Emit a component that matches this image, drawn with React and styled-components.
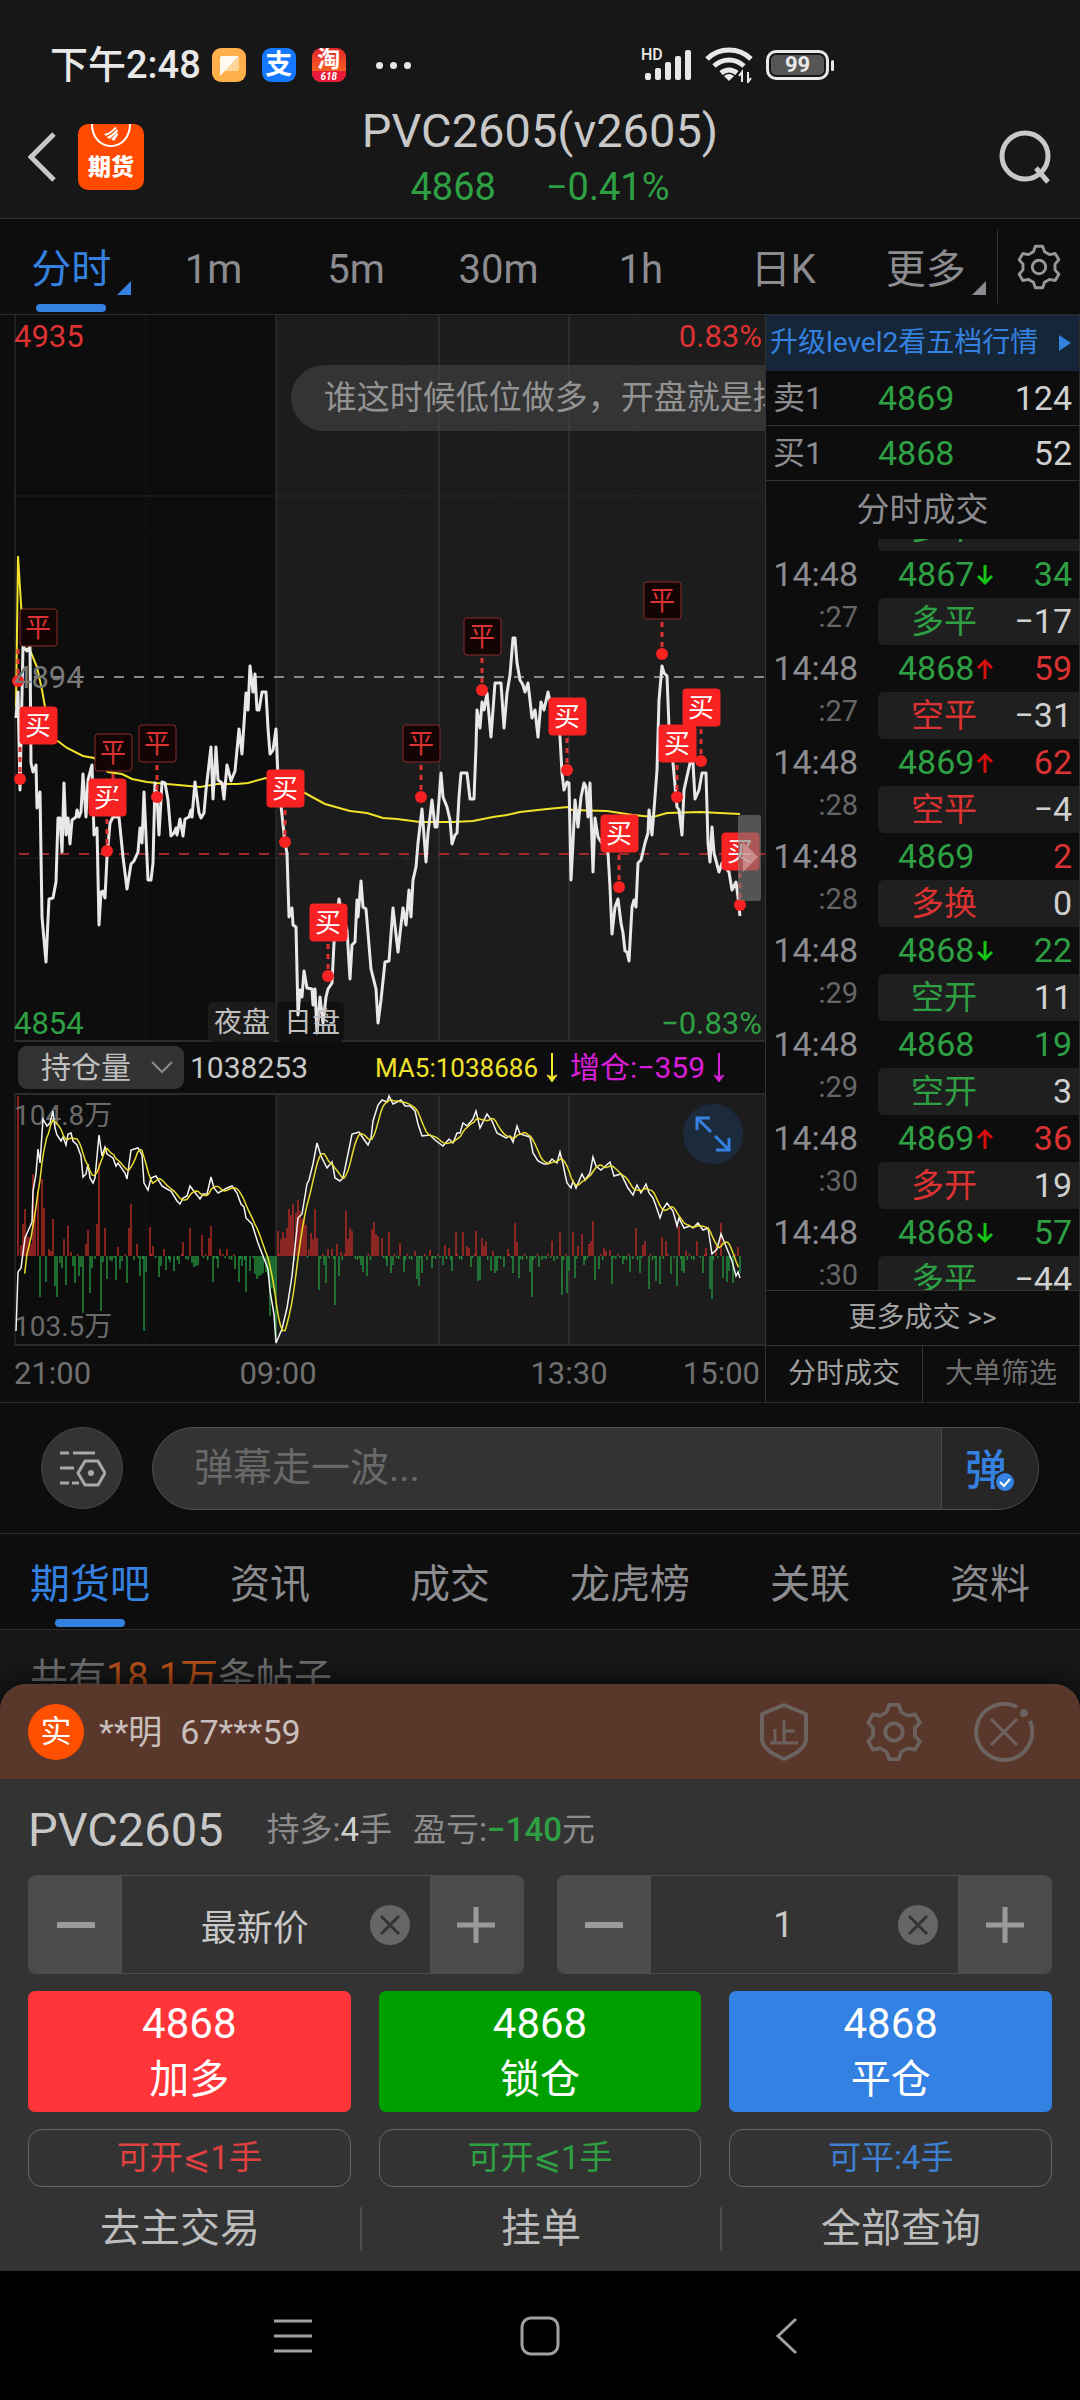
import React from 'react';
import { useState } from 'react';
import styled, { createGlobalStyle } from 'styled-components';

const RED = '#dc3232';
const GREEN = '#2ea043';
const BLUE = '#3581e0';
const LINE = '#2d2d2d';

const GlobalStyle = createGlobalStyle`
  * { box-sizing: border-box; }
  body { margin: 0; background: #000000; }
  body, button, input {
    font-family: Roboto, "Noto Sans CJK SC", "DejaVu Sans", sans-serif;
    font-weight: 400;
  }
  button {
    display: flex;
    align-items: center;
    justify-content: center;
    margin: 0;
    padding: 0;
    border: 0;
    background: none;
    color: inherit;
    cursor: pointer;
  }
  svg { display: block; flex: none; }
  p, h1, h2 { margin: 0; font-weight: 400; }
`;

/* ---------- data ---------- */

const periods = ['分时', '1m', '5m', '30m', '1h', '日K', '更多'];
const sections = ['期货吧', '资讯', '成交', '龙虎榜', '关联', '资料'];

const quotes = [
  { name: '卖1', price: '4869', count: '124' },
  { name: '买1', price: '4868', count: '52' },
];

const trades = [
  { time: '14:48', sec: ':26', price: '4868', dir: '', qty: '4', type: '多平', diff: '−2', up: false },
  { time: '14:48', sec: ':27', price: '4867', dir: 'down', qty: '34', type: '多平', diff: '−17', up: false },
  { time: '14:48', sec: ':27', price: '4868', dir: 'up', qty: '59', type: '空平', diff: '−31', up: true },
  { time: '14:48', sec: ':28', price: '4869', dir: 'up', qty: '62', type: '空平', diff: '−4', up: true },
  { time: '14:48', sec: ':28', price: '4869', dir: '', qty: '2', type: '多换', diff: '0', up: true },
  { time: '14:48', sec: ':29', price: '4868', dir: 'down', qty: '22', type: '空开', diff: '11', up: false },
  { time: '14:48', sec: ':29', price: '4868', dir: '', qty: '19', type: '空开', diff: '3', up: false },
  { time: '14:48', sec: ':30', price: '4869', dir: 'up', qty: '36', type: '多开', diff: '19', up: true },
  { time: '14:48', sec: ':30', price: '4868', dir: 'down', qty: '57', type: '多平', diff: '−44', up: false },
];

const orders = [
  { price: '4868', label: '加多', color: '#ff3539', limit: '可开⩽1手', limitColor: '#e04040' },
  { price: '4868', label: '锁仓', color: '#009f00', limit: '可开⩽1手', limitColor: GREEN },
  { price: '4868', label: '平仓', color: '#3381e3', limit: '可平:4手', limitColor: '#3d7fd0' },
];

const priceLine =
  '16,403 18,377 20,475 23,332 27,336 30,332 31,448 33,457 36,450 37,493 40,477 42,602 46,647 49,584 53,583 56,567 58,503 60,503 62,537 64,468 66,520 68,503 70,529 72,505 76,502 77,495 79,502 81,497 83,459 86,502 88,465 92,450 94,520 97,513 99,610 101,577 103,576 105,583 107,542 110,508 113,502 119,502 123,542 127,574 131,549 134,546 138,537 140,513 142,528 144,477 148,565 151,565 153,548 155,468 157,482 159,520 162,467 165,468 168,485 171,521 174,518 176,513 177,520 180,504 183,521 185,504 189,502 191,495 192,502 195,467 199,498 201,503 204,498 206,475 211,432 213,484 216,432 218,465 222,468 224,484 227,450 231,466 235,456 239,414 242,439 246,378 248,395 250,351 253,377 255,359 257,395 259,395 262,377 266,377 268,413 270,439 273,435 276,414 278,462 282,500 285,528 287,538 289,602 292,593 293,610 296,612 298,700 300,675 302,682 304,656 307,673 312,674 313,690 315,674 317,718 320,682 323,708 326,682 328,674 332,668 334,628 339,584 343,602 347,615 350,664 352,630 355,627 357,585 358,602 361,566 363,592 366,594 368,618 371,654 376,674 378,708 381,685 385,647 389,646 393,593 398,637 401,610 403,593 406,610 409,575 411,602 413,565 416,552 418,528 422,494 426,547 428,518 432,485 435,512 437,512 441,458 443,482 447,492 450,505 452,529 455,520 457,518 459,482 461,458 467,458 470,484 474,484 476,432 477,395 480,413 482,387 484,395 487,378 491,422 495,368 501,368 504,413 507,378 510,360 513,323 515,323 517,348 520,365 523,370 525,377 528,368 532,403 535,395 538,422 541,387 544,395 548,377 552,395 557,398 560,422 562,458 564,475 567,467 569,468 571,565 573,528 575,485 578,512 581,482 584,468 586,472 588,502 590,468 593,557 595,503 598,522 608,538 610,572 612,619 615,592 618,584 621,608 623,618 625,636 627,637 629,646 632,592 634,585 636,592 638,548 641,545 645,528 648,518 649,495 652,520 654,495 657,455 659,385 662,351 664,358 667,361 669,412 673,448 677,492 679,495 682,520 684,475 690,448 693,448 695,484 699,475 702,458 706,458 708,528 710,547 712,512 714,538 719,557 722,548 729,557 732,575 736,567 738,582 740,601';

const avgLine =
  '16,392 18,241 22,305 24,333 30,335 37,352 42,375 45,392 55,424 67,433 83,441 94,443 108,457 122,459 132,464 147,467 167,469 200,472 217,469 237,469 248,468 266,463 280,465 303,477 325,489 350,496 367,498 383,503 397,504 420,507 453,507 473,506 493,502 507,500 520,497 547,494 568,492 572,495 607,496 633,500 653,502 667,498 700,497 740,499';

const openInterest =
  '16,238 18,179 21,175 25,145 32,129 33,98 36,81 38,56 40,70 43,26 47,33 50,30 53,18 55,35 57,42 61,48 63,44 66,52 68,41 71,40 73,48 77,52 81,63 83,84 86,81 88,71 90,85 93,90 95,85 99,42 102,63 105,54 107,61 113,65 116,73 118,70 125,80 127,86 131,57 138,55 142,62 144,90 148,97 151,85 156,83 162,93 167,96 171,98 177,108 180,111 183,105 187,103 190,93 193,97 200,106 203,101 207,101 211,84 214,95 218,100 227,95 232,93 237,100 241,111 244,114 246,125 252,131 258,150 268,176 270,198 274,221 276,250 282,236 287,215 292,183 298,125 302,121 307,91 309,87 313,71 317,50 321,63 327,75 332,69 335,85 340,88 343,85 348,61 352,41 359,39 363,45 368,52 371,45 373,28 378,12 382,7 387,9 389,3 393,11 401,7 405,13 410,13 415,18 418,31 422,43 430,42 435,47 443,53 449,46 453,50 457,40 460,40 463,30 467,33 473,26 476,18 480,35 487,21 492,28 497,40 506,45 510,43 513,49 517,33 520,41 530,44 533,60 538,68 544,71 548,71 552,66 557,70 560,59 563,71 565,81 567,90 571,95 573,88 576,95 582,81 585,87 590,80 593,64 596,73 601,77 610,69 614,83 621,81 628,95 633,102 637,92 641,100 646,91 649,100 653,105 656,113 660,125 663,116 667,110 673,118 677,133 679,125 684,135 690,133 693,135 698,130 703,137 708,135 712,161 717,156 721,141 725,151 732,168 736,183 738,179 740,185';

// x:height, height above zero is red and below is green
const deltaBars =
  '18:160 21:11 23:32 25:47 27:20 29:19 31:12 33:82 35:46 38:65 42:77 44:48 49:7 51:5 53:37 64:17 68:30 71:4 86:12 88:26 97:32 99:93 105:28 118:9 129:28 131:52 137:12 150:29 153:10 164:7 183:14 190:28 202:21 209:18 211:30 220:7 227:7 ' +
  '40:-41 46:-26 55:-30 57:-41 60:-7 62:-12 66:-29 73:-10 75:-27 79:-20 81:-11 83:-57 90:-37 92:-12 101:-55 103:-6 107:-23 112:-5 116:-24 120:-13 122:-5 127:-27 140:-20 144:-75 146:-16 159:-21 161:-10 166:-14 170:-6 174:-15 179:-8 192:-7 194:-11 196:-10 198:-9 213:-26 218:-12 235:-13 239:-26 242:-10 246:-36 250:-15 255:-18 257:-23 259:-20 261:-19 263:-17 266:-16 268:-20 270:-60 272:-32 274:-36 276:-80 ' +
  '278:25 281:17 283:24 285:18 287:28 289:47 291:41 293:52 296:43 298:56 300:45 302:37 304:38 306:31 309:7 311:23 313:17 315:47 317:18 328:7 332:7 337:12 341:4 346:45 348:17 350:28 352:25 372:27 374:34 376:22 378:20 382:18 389:24 ' +
  '319:-34 324:-9 326:-27 335:-49 339:-20 361:-9 363:-16 367:-20 387:-8 391:-17 393:-9 ' +
  '400:13 415:5 430:6 445:11 449:8 456:24 463:24 467:10 469:8 476:25 482:18 484:10 486:15 493:5 508:7 515:33 517:14 552:15 560:24 573:24 578:10 582:22 589:12 591:15 593:35 604:8 606:5 610:6 636:28 643:11 645:15 662:19 666:15 679:30 686:5 697:15 706:8 716:10 721:33 738:9 ' +
  '387:-10 404:-16 417:-23 419:-30 422:-17 432:-12 443:-9 452:-15 471:-11 478:-25 480:-24 491:-15 495:-17 497:-15 504:-11 513:-17 519:-22 530:-16 532:-41 539:-11 554:-5 562:-39 567:-37 569:-15 575:-22 584:-9 595:-24 599:-13 612:-28 623:-8 630:-16 640:-17 649:-33 656:-25 660:-28 671:-18 677:-30 682:-15 684:-17 703:-17 710:-33 712:-43 723:-22 727:-26 729:-15 733:-27 740:-17';

const markers = [
  { x: 18, y: 366, kind: '平' },
  { x: 20, y: 464, kind: '买' },
  { x: 107, y: 536, kind: '买' },
  { x: 113, y: 491, kind: '平' },
  { x: 157, y: 482, kind: '平' },
  { x: 285, y: 527, kind: '买' },
  { x: 328, y: 661, kind: '买' },
  { x: 421, y: 482, kind: '平' },
  { x: 482, y: 375, kind: '平' },
  { x: 567, y: 455, kind: '买' },
  { x: 662, y: 339, kind: '平' },
  { x: 701, y: 446, kind: '买' },
  { x: 677, y: 482, kind: '买' },
  { x: 619, y: 572, kind: '买' },
  { x: 740, y: 590, kind: '买' },
];

const toPoints = (str) => str.split(' ').map((p) => p.split(',').map(Number));

const valueAt = (points, x) => {
  const i = points.findIndex((p) => p[0] >= x);
  if (i <= 0) return points[0][1];
  const [x0, y0] = points[i - 1];
  const [x1, y1] = points[i];
  return y0 + ((y1 - y0) * (x - x0)) / (x1 - x0);
};

// five minute average, one minute is a bit more than two units wide
const movingAverage = (points) => {
  const step = 2.17;
  const res = [];
  for (let x = 16 + step * 4; x <= 740; x += step) {
    let sum = 0;
    for (let k = 0; k < 5; k++) sum += valueAt(points, x - k * step);
    res.push(`${x.toFixed(1)},${(sum / 5).toFixed(1)}`);
  }
  return res.join(' ');
};

const bars = deltaBars.split(' ').map((b) => b.split(':').map(Number));

// minutes with hardly any change still get a stub
const stubs = [];
for (let x = 58; x < 740; x += 2.17) {
  if (!bars.some((b) => Math.abs(b[0] - x) < 1.2)) stubs.push([x, stubs.length % 4 === 0 ? 2 : -2 - (stubs.length % 3)]);
}

const gearPath = (() => {
  const pts = [];
  const add = (r, deg) => {
    const a = (deg * Math.PI) / 180;
    pts.push(`${(24 + r * Math.sin(a)).toFixed(1)} ${(24 - r * Math.cos(a)).toFixed(1)}`);
  };
  for (let k = 0; k < 6; k++) {
    const d = k * 60;
    add(17, d - 20);
    add(22, d - 10);
    add(22, d + 10);
    add(17, d + 20);
  }
  return `M${pts.join('L')}Z`;
})();

/* ---------- icons ---------- */

const GearIcon = ({ size, color, width }) => (
  <svg width={size} height={size} viewBox="0 0 48 48" fill="none" stroke={color} strokeWidth={width} strokeLinejoin="round">
    <path d={gearPath} />
    <circle cx="24" cy="24" r="7" />
  </svg>
);

const NoteIcon = () => (
  <svg width="34" height="34" viewBox="0 0 34 34">
    <rect width="34" height="34" rx="9" fill="#ffb04a" />
    <path d="M27 9v11q0 3-3 3H12z" fill="#ffd79c" />
    <path d="M8 10q0-2 2-2h17L8 28z" fill="#fffaf0" />
  </svg>
);

const SignalIcon = () => (
  <svg width="48" height="32" viewBox="0 0 48 32" fill="#e8e8e8">
    <rect x="1" y="24" width="6" height="7" rx="2" />
    <rect x="11" y="19" width="6" height="12" rx="2" />
    <rect x="21" y="13" width="6" height="18" rx="2" />
    <rect x="31" y="7" width="6" height="24" rx="2" />
    <rect x="41" y="1" width="6" height="30" rx="2" />
  </svg>
);

const WifiIcon = () => (
  <svg width="48" height="36" viewBox="0 0 48 36" fill="none" stroke="#e8e8e8" strokeWidth="5">
    <path d="M2 12C14 0 34 0 46 12" />
    <path d="M9 19c9-8 21-8 30 0" />
    <path d="M16 26c5-4 11-4 16 0" />
    <path d="M19 29l5 5 5-5a8 8 0 0 0-10 0z" fill="#e8e8e8" stroke="none" />
    <path d="M37 35V25l-3 4M43 25v10l3-4" strokeWidth="2" />
  </svg>
);

const BackIcon = () => (
  <svg width="28" height="50" viewBox="0 0 28 50" fill="none" stroke="#c8c8c8" strokeWidth="5">
    <path d="M26 2L3 25l23 23" />
  </svg>
);

const SearchIcon = () => (
  <svg width="54" height="54" viewBox="0 0 54 54" fill="none" stroke="#c8c8c8" strokeWidth="5">
    <circle cx="27" cy="26" r="23" />
    <path d="M38 38l12 14" />
  </svg>
);

const ArrowIcon = ({ dir }) => (
  <svg width="16" height="22" viewBox="0 0 16 22" fill="none" stroke={dir === 'up' ? '#d80f0f' : '#14c814'} strokeWidth="3">
    <path d={dir === 'up' ? 'M8 21V3M1 10l7-7 7 7' : 'M8 1v18M1 12l7 7 7-7'} />
  </svg>
);

const LongArrow = ({ color }) => (
  <svg width="12" height="32" viewBox="0 0 12 32" fill="none" stroke={color} strokeWidth="2">
    <path d="M6 1v26" />
    <path d="M1 23l5 7 5-7-5 2z" fill={color} strokeWidth="1" />
  </svg>
);

const DanmuIcon = () => (
  <svg width="48" height="40" viewBox="0 0 48 40" fill="none" stroke="#a8a8a8" strokeWidth="3">
    <path d="M2 5h9M15 5h22M2 20h14M2 35h9M14 35h7" />
    <path d="M27 13h13l7 12-7 12H27l-7-12z" strokeLinejoin="round" />
    <circle cx="33" cy="25" r="3" fill="#a8a8a8" stroke="none" />
  </svg>
);

const ShieldIcon = () => (
  <svg width="60" height="60" viewBox="0 0 60 60" fill="none" stroke="#6c625f" strokeWidth="4" strokeLinejoin="round">
    <path d="M30 3l22 9v25c0 9-10 15-22 20C18 52 8 46 8 37V12z" />
    <path d="M16 41h28M30 18v23M30 29h11M21 27v14" strokeWidth="3" />
  </svg>
);

const CloseIcon = () => (
  <svg width="60" height="60" viewBox="0 0 60 60" fill="none" stroke="#6c625f" strokeWidth="4">
    <path d="M43 5A28 28 0 1 0 56 19" />
    <circle cx="50" cy="11" r="4" fill="#6c625f" stroke="none" />
    <path d="M17 17l26 26M43 17L17 43" strokeWidth="3" />
  </svg>
);

const ClearIcon = () => (
  <svg width="40" height="40" viewBox="0 0 40 40">
    <circle cx="20" cy="20" r="20" fill="#666666" />
    <path d="M11 11l18 18M29 11L11 29" stroke="#333333" strokeWidth="3" />
  </svg>
);

const SignIcon = ({ plus }) => (
  <svg width="38" height="38" viewBox="0 0 38 38" stroke="#9a9a9a">
    <path d="M0 19h38" strokeWidth={plus ? 5 : 6} />
    {plus && <path d="M19 1v36" strokeWidth="5" />}
  </svg>
);

/* ---------- status bar and header ---------- */

const Screen = styled.div`
  display: flex;
  flex-direction: column;
  color: #c8c8c8;
  background: #171717;
`;
const StatusBar = styled.div`
  display: flex;
  align-items: center;
  justify-content: space-between;
  padding: 38px 246px 0 50px;
  height: 92px;
  color: #e8e8e8;
`;
const StatusGroup = styled.div`
  display: flex;
  align-items: center;
  gap: ${({ $gap }) => $gap}px;
`;
const Clock = styled.span`
  font-size: 38px;
  line-height: 44px;
  font-weight: 500;
`;
const AppBadge = styled.span`
  display: flex;
  flex-direction: column;
  align-items: center;
  justify-content: center;
  width: 34px;
  height: 34px;
  overflow: hidden;
  border-radius: 9px;
  background: ${({ $bg }) => $bg};
  color: #ffffff;
  font-size: ${({ $size }) => $size}px;
  line-height: ${({ $size }) => $size}px;
  font-weight: 700;
  small {
    width: 100%;
    background: #e81a3c;
    font-size: 10px;
    line-height: 11px;
    font-style: italic;
    text-align: center;
  }
`;
const Dots = styled.span`
  display: flex;
  gap: 7px;
  padding-left: 14px;
  i {
    width: 7px;
    height: 7px;
    border-radius: 50%;
    background: #e8e8e8;
  }
`;
const HdSignal = styled.div`
  position: relative;
  span {
    position: absolute;
    left: -3px;
    top: -2px;
    font-size: 16px;
    line-height: 16px;
    font-weight: 500;
  }
`;
const Battery = styled.span`
  display: flex;
  align-items: center;
  gap: 2px;
  b {
    display: block;
    width: 63px;
    padding: 2px;
    border: 3px solid #e8e8e8;
    border-radius: 10px;
    background: #555555;
    background-clip: content-box;
    font-size: 22px;
    line-height: 20px;
    font-weight: 700;
    text-align: center;
  }
  i {
    width: 3px;
    height: 11px;
    border-radius: 2px;
    background: #e8e8e8;
  }
`;
const Header = styled.header`
  display: grid;
  grid-template-columns: 1fr auto 1fr;
  align-items: center;
  height: 127px;
  padding: 4px 28px 0;
  border-bottom: 1px solid #303030;
`;
const HeaderLeft = styled.div`
  display: flex;
  align-items: center;
  gap: 22px;
`;
const HeaderRight = styled.div`
  display: flex;
  justify-content: flex-end;
`;
const Logo = styled.a`
  display: flex;
  flex-direction: column;
  align-items: center;
  width: 66px;
  height: 66px;
  overflow: hidden;
  border-radius: 10px;
  background: #ff4a00;
  color: #ffffff;
  font-size: 23px;
  line-height: 40px;
  font-weight: 900;
  text-decoration: none;
`;
const Title = styled.h1`
  font-size: 47px;
  line-height: 64px;
  text-align: center;
`;
const PriceRow = styled.p`
  display: flex;
  justify-content: center;
  gap: 50px;
  padding-bottom: 4px;
  color: ${GREEN};
  font-size: 38px;
  line-height: 48px;
`;

/* ---------- tabs ---------- */

const Tabs = styled.nav`
  display: flex;
  align-items: stretch;
  height: 96px;
  background: #0d0d0d;
  border-bottom: 1px solid ${LINE};
`;
const Tab = styled.button`
  position: relative;
  flex: 1;
  padding-top: 6px;
  font-size: 40px;
  line-height: 56px;
  color: ${({ $active }) => ($active ? BLUE : '#8c8c90')};
  &::after {
    content: '';
    position: absolute;
    left: 50%;
    bottom: 2px;
    width: 70px;
    height: 8px;
    margin-left: -35px;
    border-radius: 4px;
    background: ${({ $active }) => ($active ? BLUE : 'transparent')};
  }
`;
const Corner = styled.i`
  position: absolute;
  right: 11px;
  bottom: 19px;
  border-style: solid;
  border-width: 0 0 14px 14px;
  border-color: transparent transparent currentColor transparent;
`;
const GearButton = styled.button`
  width: 83px;
  margin: 11px 0;
  border-left: 1px solid #333333;
`;

/* ---------- market area ---------- */

const Market = styled.section`
  display: grid;
  grid-template-columns: 17fr 7fr;
  background: #0d0d0d;
  border-bottom: 1px solid ${LINE};
`;
const ChartColumn = styled.div`
  min-width: 0;
  svg.chart {
    width: 100%;
    height: auto;
  }
`;
const ChartBox = styled.div`
  position: relative;
  overflow: hidden;
`;
const Bubble = styled.div`
  position: absolute;
  left: 38%;
  top: 50px;
  padding: 0 33px;
  border-radius: 33px;
  background: rgba(75, 75, 75, 0.5);
  color: #939393;
  font-size: 33px;
  line-height: 66px;
  white-space: nowrap;
`;
const IndicatorRow = styled.div`
  display: flex;
  align-items: center;
  height: 51px;
  padding: 0 40px 0 18px;
  font-size: 30px;
  line-height: 44px;
  white-space: nowrap;
`;
const Picker = styled.button`
  gap: 20px;
  width: 166px;
  height: 43px;
  margin-right: 6px;
  padding-left: 12px;
  border-radius: 9px;
  background: #333333;
  color: #c0c0c0;
  font-size: 30px;
  line-height: 43px;
`;
const Ma = styled.span`
  display: flex;
  align-items: center;
  gap: 8px;
  margin-left: 12px;
  color: ${({ $color }) => $color};
`;
const MaShort = styled(Ma)`
  margin-left: auto;
  font-size: 26px;
`;
const ExpandButton = styled.button`
  position: absolute;
  right: 22px;
  top: 11px;
  width: 60px;
  height: 60px;
  border-radius: 50%;
  background: #1c2b3b;
`;

const QuoteColumn = styled.aside`
  display: flex;
  flex-direction: column;
  min-width: 0;
  border-left: 1px solid #333333;
  border-right: 1px solid ${LINE};
`;
const LevelLink = styled.a`
  display: flex;
  align-items: center;
  justify-content: space-between;
  padding: 0 8px 0 4px;
  background: #142637;
  color: ${BLUE};
  font-size: 28px;
  line-height: 56px;
  text-decoration: none;
  white-space: nowrap;
`;
const QuoteRow = styled.div`
  display: grid;
  grid-template-columns: 105px 1fr auto;
  padding: 0 7px;
  border-bottom: 1px solid #333333;
  font-size: 34px;
  line-height: 54px;
  color: #d0d0d0;
  span:nth-child(1) { color: #8c8c90; font-size: 32px; }
  span:nth-child(2) { color: ${GREEN}; }
`;
const QuoteHeading = styled.h2`
  color: #8c8c90;
  font-size: 33px;
  line-height: 58px;
  text-align: center;
`;
const TradeWindow = styled.div`
  flex: 1 1 0;
  min-height: 0;
  overflow: hidden;
`;
/* the list is scrolled so that its first rows are cut off */
const TradeList = styled.div`
  margin-top: -82px;
`;
const Trade = styled.div`
  display: grid;
  grid-template-columns: 92px 1fr;
  column-gap: 20px;
  font-size: 34px;
  line-height: 47px;
`;
const TradeTime = styled.span`
  text-align: right;
  color: ${({ $dim }) => ($dim ? '#666666' : '#8c8c90')};
  font-size: ${({ $dim }) => ($dim ? 29 : 34)}px;
  line-height: ${({ $dim }) => ($dim ? 38 : 47)}px;
`;
const TradeCell = styled.span`
  display: flex;
  align-items: center;
  gap: 3px;
  height: 47px;
  padding: 0 7px 0 ${({ $box }) => ($box ? 33 : 20)}px;
  border-radius: 6px 0 0 6px;
  background: ${({ $box }) => ($box ? '#1f1f1f' : 'none')};
  color: ${({ $up }) => ($up ? RED : GREEN)};
  em {
    color: ${GREEN};
    font-style: normal;
  }
  small { font-size: 33px; }
  b {
    margin-left: auto;
    font-weight: 400;
    color: ${({ $box }) => ($box ? '#d0d0d0' : 'inherit')};
  }
`;
const MoreTrades = styled.a`
  border-top: 1px solid #333333;
  color: #a0a0a0;
  font-size: 28px;
  line-height: 54px;
  text-align: center;
  text-decoration: none;
`;
const TradeTabs = styled.div`
  display: flex;
  border-top: 1px solid #333333;
  button {
    flex: 1;
    color: #707070;
    font-size: 28px;
    line-height: 56px;
  }
  button:first-child {
    border-right: 1px solid #333333;
    color: #a0a0a0;
  }
`;

/* ---------- comment bar and posts ---------- */

const CommentBar = styled.div`
  display: flex;
  align-items: center;
  gap: 29px;
  height: 131px;
  padding: 0 41px;
  background: #0d0d0d;
  border-bottom: 1px solid ${LINE};
`;
const RoundButton = styled.button`
  flex: none;
  width: 82px;
  height: 82px;
  border: 1px solid #484848;
  border-radius: 50%;
  background: #333333;
`;
const CommentField = styled.div`
  display: flex;
  flex: 1;
  height: 83px;
  overflow: hidden;
  border: 1px solid #505050;
  border-radius: 42px;
  background: #333333;
  input {
    flex: 1;
    min-width: 0;
    padding: 0 41px;
    border: 0;
    outline: 0;
    background: none;
    color: #c8c8c8;
    font-size: 39px;
  }
  input::placeholder { color: #686868; opacity: 1; }
  button {
    position: relative;
    width: 97px;
    padding: 0 8px 4px 0;
    border-left: 1px solid #484848;
    background: #262626;
    color: ${BLUE};
    font-size: 42px;
    font-weight: 500;
  }
  svg {
    position: absolute;
    left: 52px;
    top: 43px;
  }
`;
const Posts = styled.p`
  height: 96px;
  padding: 25px 30px 0;
  color: #6f6f6f;
  font-size: 38px;
  line-height: 44px;
  span { color: #b8501a; }
`;

/* ---------- trade sheet ---------- */

const Sheet = styled.section`
  position: relative;
  margin-top: -42px;
  overflow: hidden;
  border-radius: 26px 26px 0 0;
  background: #333333;
  box-shadow: 0 0 28px rgba(0, 0, 0, 0.8);
`;
const SheetHeader = styled.div`
  display: flex;
  align-items: center;
  height: 95px;
  padding: 0 46px 0 28px;
  background: #5a372b;
  color: #c8bfbc;
  font-size: 34px;
  line-height: 48px;
`;
const RealBadge = styled.span`
  width: 56px;
  margin-right: 15px;
  border-radius: 50%;
  background: #ff5000;
  color: #ffffff;
  font-size: 31px;
  line-height: 56px;
  text-align: center;
`;
const Account = styled.span`
  margin-right: 18px;
`;
const SheetTools = styled.div`
  display: flex;
  gap: 50px;
  margin-left: auto;
`;
const SheetBody = styled.div`
  display: flex;
  flex-direction: column;
  gap: 17px;
  padding: 22px 28px 20px;
`;
const Position = styled.div`
  display: flex;
  align-items: center;
  gap: 21px;
  height: 57px;
  color: #8c8c8c;
  font-size: 33px;
  line-height: 52px;
  h2 {
    margin-right: 22px;
    color: #c8c8c8;
    font-size: 47px;
  }
  b { color: #d0d0d0; font-weight: 400; }
  em { color: ${GREEN}; font-style: normal; font-weight: 500; }
`;
const Steppers = styled.div`
  display: grid;
  grid-template-columns: 1fr 1fr;
  gap: 33px;
`;
const Stepper = styled.div`
  display: flex;
  height: 99px;
  overflow: hidden;
  border: 1px solid #4c4c4c;
  border-radius: 7px;
`;
const StepButton = styled.button`
  flex: none;
  width: 93px;
  background: #4c4c4c;
`;
const StepField = styled.div`
  display: flex;
  flex: 1;
  align-items: center;
  min-width: 0;
  padding: 0 20px 0 18px;
  input {
    flex: 1;
    width: 0;
    padding: 0;
    border: 0;
    outline: 0;
    background: none;
    color: #c8c8c8;
    font-size: 36px;
    text-align: center;
  }
`;
const OrderGrid = styled.div`
  display: grid;
  grid-template-columns: repeat(3, 1fr);
  gap: 17px 28px;
`;
const OrderButton = styled.button`
  flex-direction: column;
  height: 121px;
  border-radius: 7px;
  background: ${({ $color }) => $color};
  color: #ffffff;
  font-size: 42px;
  line-height: 56px;
  span:last-child { font-size: 40px; }
`;
const LimitButton = styled.button`
  height: 58px;
  border: 1px solid #666666;
  border-radius: 14px;
  color: ${({ $color }) => $color};
  font-size: 33px;
  line-height: 40px;
`;
const SheetLinks = styled.div`
  display: grid;
  grid-template-columns: repeat(3, 1fr);
  margin: 3px -28px 0;
  a {
    border-left: 2px solid #4c4c4c;
    color: #bcbcbc;
    font-size: 40px;
    line-height: 44px;
    text-align: center;
    text-decoration: none;
  }
  a:first-child { border-left: 0; }
`;
const NavBar = styled.nav`
  display: flex;
  align-items: center;
  justify-content: center;
  gap: 208px;
  height: 130px;
  background: #000000;
`;

/* ---------- charts ---------- */

const Grid = ({ height }) => (
  <g fill="none" stroke="#2c2c2c">
    <rect x="276" y="0" width="489" height={height} fill="#1c1c1c" stroke="none" />
    <path d={`M15 0V${height}M276 0V${height}`} strokeWidth="1" stroke="#353535" />
    <path d={`M439 0V${height}M569 0V${height}M15 ${height - 1}H765`} strokeWidth="2" />
    <path d={`M146 0V${height}M407 0V${height}M504 0V${height}M634 0V${height}`} strokeDasharray="1 3" />
  </g>
);

const PriceChart = () => (
  <svg className="chart" viewBox="0 0 765 727" fontSize="31">
    <Grid height={727} />
    <path d="M15 181H765M15 543H765" stroke="#333333" strokeDasharray="1 1" />
    <rect x="208" y="687" width="68" height="40" rx="5" fill="#1b1b1b" />
    <rect x="277" y="687" width="67" height="40" rx="5" fill="#101010" />
    <path d="M34 362H765" stroke="#888888" strokeWidth="2" strokeDasharray="10 10" />
    <path d="M19 539H765" stroke="#a02a2a" strokeWidth="2" strokeDasharray="10 10" />
    <polyline points={avgLine} fill="none" stroke="#f2e22c" strokeWidth="2" />
    <polyline points={priceLine} fill="none" stroke="#e8e8e8" strokeWidth="3" strokeLinejoin="round" />
    {markers.map(({ x, y, kind }) => {
      const left = Math.max(x - 18, 20);
      const buy = kind === '买';
      return (
        <g key={`${x}-${y}`}>
          <path d={`M${x} ${y - 32}V${y}`} stroke={RED} strokeWidth="3" strokeDasharray="5 5" />
          <circle cx={x} cy={y} r="6" fill="#f82222" />
          <rect x={left} y={y - 72} width="37" height="37" rx="3" fill={buy ? '#f82222' : '#140505'} stroke={buy ? '#f82222' : '#8a2a2a'} />
          <text x={left + 18} y={y - 44} fontSize="26" textAnchor="middle" fill={buy ? '#ffffff' : RED}>{kind}</text>
        </g>
      );
    })}
    <text x="14" y="373" fill="#777777">4894</text>
    <text x="14" y="32" fill={RED}>4935</text>
    <text x="762" y="32" fill={RED} textAnchor="end">0.83%</text>
    <text x="14" y="719" fill={GREEN}>4854</text>
    <text x="762" y="719" fill={GREEN} textAnchor="end">−0.83%</text>
    <text x="214" y="717" fontSize="28" fill="#c0c0c0">夜盘</text>
    <text x="284" y="717" fontSize="28" fill="#c0c0c0">日盘</text>
    <rect x="738" y="500" width="23" height="86" rx="3" fill="#7a7a7a" fillOpacity="0.6" />
    <path d="M743 527l15 15-15 15z" fill="#d8a0a0" fillOpacity="0.7" />
  </svg>
);

const VolumeChart = () => {
  const all = [...bars, ...stubs];
  return (
    <svg className="chart" viewBox="0 0 765 309" fontSize="28">
      <Grid height={253} />
      <path d="M15 1H765" stroke="#2c2c2c" strokeWidth="2" />
      <path d={all.filter((b) => b[1] > 0).map(([x, h]) => `M${x.toFixed(1)} 163v${-h}`).join('')} stroke="#b02a24" strokeWidth="1.5" />
      <path d={all.filter((b) => b[1] < 0).map(([x, h]) => `M${x.toFixed(1)} 163v${-h}`).join('')} stroke="#238a3a" strokeWidth="1.5" />
      <text x="14" y="32" fill="#6a6a6a">104.8万</text>
      <text x="14" y="243" fill="#6a6a6a">103.5万</text>
      <polyline points={openInterest} fill="none" stroke="#f4f4f4" strokeWidth="1.5" />
      <polyline points={movingAverage(toPoints(openInterest))} fill="none" stroke="#e8dc30" strokeWidth="1.5" />
      <g fontSize="31" fill="#707070">
        <text x="14" y="291">21:00</text>
        <text x="278" y="291" textAnchor="middle">09:00</text>
        <text x="569" y="291" textAnchor="middle">13:30</text>
        <text x="760" y="291" textAnchor="end">15:00</text>
      </g>
    </svg>
  );
};

/* ---------- page ---------- */

const PriceStepper = ({ label, value, onChange, onStep }) => (
  <Stepper>
    <StepButton aria-label={`${label}减`} onClick={() => onStep(-1)}><SignIcon /></StepButton>
    <StepField>
      <input aria-label={label} value={value} onChange={(e) => onChange(e.target.value)} />
      <button aria-label={`清空${label}`} onClick={() => onChange('')}><ClearIcon /></button>
    </StepField>
    <StepButton aria-label={`${label}加`} onClick={() => onStep(1)}><SignIcon plus /></StepButton>
  </Stepper>
);

const App = () => {
  const [period, setPeriod] = useState('分时');
  const [section, setSection] = useState('期货吧');
  const [price, setPrice] = useState('最新价');
  const [count, setCount] = useState('1');

  return (
    <>
      <GlobalStyle />
      <Screen>
        <StatusBar>
          <StatusGroup $gap={11}>
            <Clock>下午2:48</Clock>
            <StatusGroup $gap={16}>
              <NoteIcon />
              <AppBadge $bg="#1677ff" $size={27}>支</AppBadge>
              <AppBadge $bg="linear-gradient(#e0242c, #ff7a1e)" $size={23}>淘<small>618</small></AppBadge>
              <Dots><i /><i /><i /></Dots>
            </StatusGroup>
          </StatusGroup>
          <StatusGroup $gap={13}>
            <HdSignal><span>HD</span><SignalIcon /></HdSignal>
            <WifiIcon />
            <Battery><b>99</b><i /></Battery>
          </StatusGroup>
        </StatusBar>

        <Header>
          <HeaderLeft>
            <button aria-label="返回"><BackIcon /></button>
            <Logo href="#futures">
              <svg width="40" height="24" viewBox="0 0 40 24" fill="none" stroke="#fff" strokeWidth="2">
                <path d="M1 0c0 13 8 22 19 22S39 13 39 0" />
                <path d="M13 10q6-1 11-7l2 1q-5 5-11 8zM16 13q6-3 10-8l1 2q-4 5-9 8zM20 15q4-3 6-7l1 3q-2 3-4 6z" fill="#fff" stroke="none" />
              </svg>
              期货
            </Logo>
          </HeaderLeft>
          <div>
            <Title>PVC2605(v2605)</Title>
            <PriceRow><span>4868</span><span>−0.41%</span></PriceRow>
          </div>
          <HeaderRight>
            <button aria-label="搜索"><SearchIcon /></button>
          </HeaderRight>
        </Header>

        <Tabs>
          {periods.map((name) => (
            <Tab key={name} $active={name === period} onClick={() => setPeriod(name)}>
              {name}
              {(name === '分时' || name === '更多') && <Corner />}
            </Tab>
          ))}
          <GearButton aria-label="图表设置"><GearIcon size={46} color="#98989c" width="3" /></GearButton>
        </Tabs>

        <Market>
          <ChartColumn>
            <ChartBox>
              <PriceChart />
              <Bubble>谁这时候低位做多，开盘就是掉</Bubble>
            </ChartBox>
            <IndicatorRow>
              <Picker>
                持仓量
                <svg width="22" height="13" viewBox="0 0 22 13" fill="none" stroke="#8c8c8c" strokeWidth="2">
                  <path d="M1 1l10 10L21 1" />
                </svg>
              </Picker>
              <span>1038253</span>
              <MaShort $color="#f2e22c">MA5:1038686<LongArrow color="#f2e22c" /></MaShort>
              <Ma $color="#d81fd8">增仓:−359<LongArrow color="#d81fd8" /></Ma>
            </IndicatorRow>
            <ChartBox>
              <VolumeChart />
              <ExpandButton aria-label="全屏">
                <svg width="36" height="36" viewBox="0 0 36 36" fill="none" stroke={BLUE} strokeWidth="3">
                  <path d="M2 14V2h13M2 2l14 14M20 20l14 14M34 22v12H21" />
                </svg>
              </ExpandButton>
            </ChartBox>
          </ChartColumn>

          <QuoteColumn>
            <LevelLink href="#level2">
              升级level2看五档行情
              <svg width="12" height="16" viewBox="0 0 12 16" fill={BLUE}><path d="M0 0l12 8-12 8z" /></svg>
            </LevelLink>
            {quotes.map((q) => (
              <QuoteRow key={q.name}>
                <span>{q.name}</span><span>{q.price}</span><span>{q.count}</span>
              </QuoteRow>
            ))}
            <QuoteHeading>分时成交</QuoteHeading>
            <TradeWindow>
              <TradeList>
                {trades.map((t, i) => (
                  <Trade key={i}>
                    <TradeTime>{t.time}</TradeTime>
                    <TradeCell $up={t.up}>
                      <em>{t.price}</em>
                      {t.dir && <ArrowIcon dir={t.dir} />}
                      <b>{t.qty}</b>
                    </TradeCell>
                    <TradeTime $dim>{t.sec}</TradeTime>
                    <TradeCell $box $up={t.up}>
                      <small>{t.type}</small>
                      <b>{t.diff}</b>
                    </TradeCell>
                  </Trade>
                ))}
              </TradeList>
            </TradeWindow>
            <MoreTrades href="#trades">更多成交 &gt;&gt;</MoreTrades>
            <TradeTabs>
              <button>分时成交</button>
              <button>大单筛选</button>
            </TradeTabs>
          </QuoteColumn>
        </Market>

        <CommentBar>
          <RoundButton aria-label="弹幕设置"><DanmuIcon /></RoundButton>
          <CommentField>
            <input aria-label="弹幕" placeholder="弹幕走一波..." />
            <button>
              弹
              <svg width="22" height="22" viewBox="0 0 22 22" fill="none">
                <circle cx="11" cy="11" r="10" fill={BLUE} stroke="#262626" strokeWidth="2" />
                <path d="M6 11l4 4 6-7" stroke="#fff" strokeWidth="2" />
              </svg>
            </button>
          </CommentField>
        </CommentBar>

        <Tabs>
          {sections.map((name) => (
            <Tab key={name} $active={name === section} onClick={() => setSection(name)}>{name}</Tab>
          ))}
        </Tabs>

        <Posts>共有<span>18.1万</span>条帖子</Posts>

        <Sheet>
          <SheetHeader>
            <RealBadge>实</RealBadge>
            <Account>**明</Account>
            <Account>67***59</Account>
            <SheetTools>
              <button aria-label="止损"><ShieldIcon /></button>
              <button aria-label="设置"><GearIcon size={60} color="#6c625f" width="3" /></button>
              <button aria-label="关闭"><CloseIcon /></button>
            </SheetTools>
          </SheetHeader>
          <SheetBody>
            <Position>
              <h2>PVC2605</h2>
              <span>持多:<b>4</b>手</span>
              <span>盈亏:<em>−140</em>元</span>
            </Position>
            <Steppers>
              <PriceStepper label="价格" value={price} onChange={setPrice} onStep={(n) => setPrice(String((Number(price) || 4868) + n))} />
              <PriceStepper label="手数" value={count} onChange={setCount} onStep={(n) => setCount(String(Math.max(1, Number(count) + n)))} />
            </Steppers>
            <OrderGrid>
              {orders.map((o) => (
                <OrderButton key={o.label} $color={o.color}>
                  <span>{o.price}</span>
                  <span>{o.label}</span>
                </OrderButton>
              ))}
              {orders.map((o) => (
                <LimitButton key={o.label} $color={o.limitColor}>{o.limit}</LimitButton>
              ))}
            </OrderGrid>
            <SheetLinks>
              <a href="#main">去主交易</a>
              <a href="#pending">挂单</a>
              <a href="#query">全部查询</a>
            </SheetLinks>
          </SheetBody>
        </Sheet>

        <NavBar>
          <button aria-label="最近任务">
            <svg width="38" height="38" viewBox="0 0 38 38" stroke="#a0a0a0" strokeWidth="3"><path d="M0 4h38M0 19h38M0 34h38" /></svg>
          </button>
          <button aria-label="主屏幕">
            <svg width="40" height="40" viewBox="0 0 40 40" fill="none" stroke="#a0a0a0" strokeWidth="3"><rect x="2" y="2" width="36" height="36" rx="9" /></svg>
          </button>
          <button aria-label="返回上一页">
            <svg width="38" height="38" viewBox="0 0 38 38" fill="none" stroke="#a0a0a0" strokeWidth="3"><path d="M28 2L10 19l18 17" /></svg>
          </button>
        </NavBar>
      </Screen>
    </>
  );
};

export default App;
